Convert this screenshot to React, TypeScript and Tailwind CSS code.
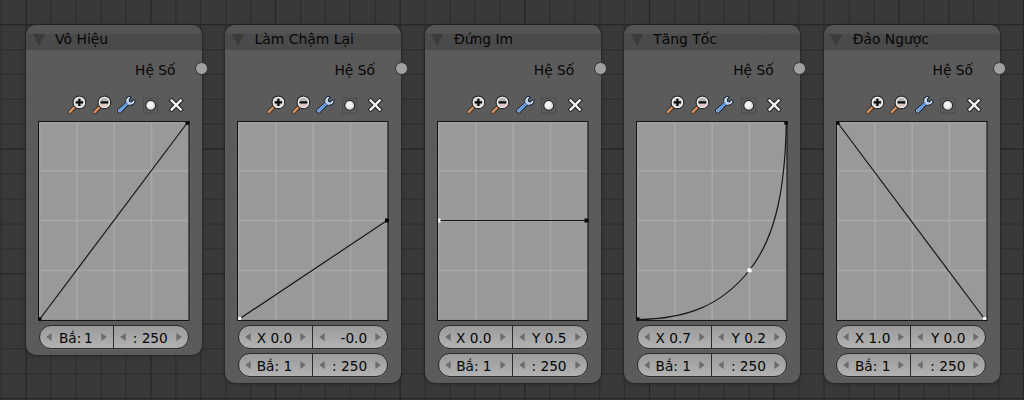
import React from "react";

type NodeData = {
  title: string;
  coords?: [string, string];
  frame: string;
  curve: string;
  points: { x: number; y: number; selected?: boolean }[];
};

const nodes: NodeData[] = [
  {
    title: "Vô Hiệu",
    frame: "Bắ:\u20091",
    curve: "M1.5 198.5L149.5 1.5",
    points: [{ x: 1.5, y: 198.3 }, { x: 149.5, y: 1.7 }],
  },
  {
    title: "Làm Chậm Lại",
    coords: ["X 0.0", "-0.0"],
    frame: "Bắ: 1",
    curve: "M1.5 198.5L150 99.5",
    points: [{ x: 2.2, y: 198, selected: true }, { x: 150, y: 99.5 }],
  },
  {
    title: "Đứng Im",
    coords: ["X 0.0", "Y 0.5"],
    frame: "Bắ: 1",
    curve: "M1.5 99.5L150 99.5",
    points: [{ x: 1.5, y: 99.5, selected: true }, { x: 149.5, y: 99.5 }],
  },
  {
    title: "Tăng Tốc",
    coords: ["X 0.7", "Y 0.2"],
    frame: "Bắ: 1",
    curve: "M1.5 198.5C50 198 85 185 113.3 149.5C137 119.5 149 76 150.3 2",
    points: [{ x: 1.5, y: 198.3 }, { x: 113.5, y: 149.3, selected: true }, { x: 150.3, y: 1.7 }],
  },
  {
    title: "Đảo Ngược",
    coords: ["X 1.0", "Y 0.0"],
    frame: "Bắ: 1",
    curve: "M1.5 1.5L149 198.5",
    points: [{ x: 1.5, y: 1.7 }, { x: 149, y: 198, selected: true }],
  },
];

const PITCH = 24.93;

function Backdrop() {
  const columns = Array.from({ length: 42 }, (_, i) => i);
  const rows = Array.from({ length: 16 }, (_, i) => i);
  return (
    <svg className="absolute inset-0" width="1024" height="400">
      {columns.map((i) => (
        <path key={i} d={`M${1.3 + i * PITCH} 0V400`} stroke={i % 5 === 1 ? "#272727" : "#2f2f2f"} strokeWidth="1.3" />
      ))}
      {rows.map((i) => (
        <path key={i} d={`M0 ${24.6 + i * PITCH}H1024`} stroke={i % 5 === 0 ? "#272727" : "#2f2f2f"} strokeWidth="1.3" />
      ))}
    </svg>
  );
}

function Magnifier({ plus }: { plus?: boolean }) {
  return (
    <svg width="24.5" height="22" viewBox="0 0 24.5 22" className="shrink-0">
      <path d="M3.6 18.4L8.8 13" stroke="#33241b" strokeWidth="4" strokeLinecap="round" />
      <path d="M3.6 18.4L8.2 13.6" stroke="#c97f4d" strokeWidth="2.6" strokeLinecap="round" />
      <path d="M3.4 17.8L7.2 13.8" stroke="#efb88e" strokeWidth="0.9" strokeLinecap="round" />
      <circle cx="13.4" cy="8.4" r="6.3" fill="#d6d6d6" stroke="#2b2b2b" strokeWidth="1.2" />
      <circle cx="13.4" cy="8.4" r="5.1" fill={plus ? "#cfcfcf" : "#b4b4b4"} stroke="#f2f2f2" strokeWidth="1.1" />
      {!plus && <path d="M9 9.4H17.8A4.5 4.5 0 0 1 9 9.4Z" fill="#e0c4c0" />}
      <path d={plus ? "M9.7 8.4H17.1M13.4 4.7V12.1" : "M9.6 8.4H17.2"} stroke="#080808" strokeWidth="2.2" />
    </svg>
  );
}

function Wrench() {
  return (
    <svg width="24.5" height="22" viewBox="0 0 24.5 22" className="shrink-0">
      <path
        d="M14.6 2.2C11.3 3.2 10.2 5.8 10.9 8.6L2.9 15.6C1.6 17.6 4 20 6 18.6L13.3 11C16.5 11.8 19.8 10.2 20.2 6.6L18.8 5.6L16.6 7.9L14.6 7.4L14.2 5.6L16.2 3.2Z"
        fill="#dce8f7"
        stroke="#1e2b3d"
        strokeWidth="1.1"
        strokeLinejoin="round"
      />
      <path d="M12 9.6L4.6 17" stroke="#5b94e2" strokeWidth="2.2" strokeLinecap="round" />
      <path d="M12.6 6.6C12.9 8.4 14.2 9.6 16.4 9.5" stroke="#9cc0ee" strokeWidth="1" fill="none" />
    </svg>
  );
}

function ClipDot() {
  return (
    <svg width="24.5" height="22" viewBox="0 0 24.5 22" className="shrink-0">
      <rect x="3.5" y="4.2" width="14.3" height="14.8" fill="#5c5c5c" stroke="#4c4c4c" />
      <circle cx="10.7" cy="11.4" r="5" fill="#dedede" stroke="#2b2b2b" strokeWidth="1.2" />
      <circle cx="10.2" cy="10.8" r="3" fill="#f3f3f3" />
    </svg>
  );
}

function Cross() {
  return (
    <svg width="24.5" height="22" viewBox="0 0 24.5 22" className="shrink-0" strokeLinecap="square">
      <path d="M7.7 6.5L16.7 15.5M16.7 6.5L7.7 15.5" stroke="#222222" strokeWidth="4.4" />
      <path d="M7.7 6.5L16.7 15.5M16.7 6.5L7.7 15.5" stroke="#f5f5f5" strokeWidth="2.4" />
    </svg>
  );
}

function CurvePlot({ curve, points }: Pick<NodeData, "curve" | "points">) {
  return (
    <svg width="152" height="200" viewBox="0 0 152 200" className="ml-[12px] mt-[5px] block">
      <rect x="0.5" y="0.5" width="150.5" height="199" fill="#999999" />
      <path d="M1.5 1V199M38.9 1V199M76.2 1V199M113.5 1V199" stroke="#a8a8a8" strokeWidth="1.6" />
      <path d="M1 1.5H150.5M1 50H150.5M1 99.6H150.5M1 149.5H150.5" stroke="#a8a8a8" strokeWidth="1.6" />
      <path d={curve} fill="none" stroke="#161616" strokeWidth="1.2" />
      {points.map((p) => (
        <rect key={`${p.x}-${p.y}`} x={p.x - 2} y={p.y - 2} width="4" height="4" fill={p.selected ? "#ffffff" : "#050505"} />
      ))}
      <rect x="0.5" y="0.5" width="150.5" height="199" fill="none" stroke="#141414" strokeWidth="1.1" />
    </svg>
  );
}

function Arrow({ right }: { right?: boolean }) {
  return (
    <svg width="6" height="8" viewBox="0 0 6 8" className="shrink-0">
      <path d={right ? "M0.4 0L5.8 4L0.4 8Z" : "M5.6 0L0.2 4L5.6 8Z"} fill="#6c6c6c" />
    </svg>
  );
}

function Field({ value, last }: { value: string; last?: boolean }) {
  return (
    <div className={last ? "flex flex-1 items-center px-[6px]" : "flex w-[74px] items-center border-r border-[#2c2c2c] px-[6px]"}>
      <Arrow />
      <span className="flex-1 whitespace-pre pr-[8px] pt-px text-right leading-[20px] text-[#060606]">{value}</span>
      <Arrow right />
    </div>
  );
}

function FieldPair({ values }: { values: [string, string] }) {
  return (
    <div className="ml-[12.8px] mt-1 flex h-6 w-[150px] rounded-full border border-[#2c2c2c] bg-linear-to-b from-[#9b9b9b] to-[#b2b2b2] shadow-[0_1px_0_rgba(255,255,255,0.08)]">
      <Field value={values[0]} />
      <Field value={values[1]} last />
    </div>
  );
}

function CurveNode({ node }: { node: NodeData }) {
  return (
    <section className="relative w-44 shrink-0 rounded-[10px] bg-[#626262]/85 pb-1.5 shadow-[0_0_0_1px_rgba(30,30,30,0.3),0_1px_4px_rgba(0,0,0,0.3)]">
      <header className="flex h-[25px] items-center rounded-t-[10px] bg-linear-to-b from-[#525252]/80 from-[30%] to-[#464646]/80 to-[40%] pl-[6.5px]">
        <svg width="12" height="12" viewBox="0 0 12 12" className="mt-[4px] shrink-0">
          <path d="M0 0H12L6 12Z" fill="#3b3b3b" />
        </svg>
        <h2 className="ml-[10.6px] whitespace-nowrap pt-[3px] text-[13.9px] leading-[20px] text-[#060606]">{node.title}</h2>
      </header>
      <div className="flex h-11 items-start justify-end pr-[26.5px] pt-[10px] text-[13.8px] leading-[20px] text-[#060606]">Hệ Số</div>
      <span className="absolute right-[-6.2px] top-[37px] size-[13px] rounded-full border border-[#303030] bg-[#a0a0a0]" />
      <div className="flex h-[22px] pl-10">
        <Magnifier plus />
        <Magnifier />
        <Wrench />
        <ClipDot />
        <Cross />
      </div>
      <CurvePlot curve={node.curve} points={node.points} />
      {node.coords && <FieldPair values={node.coords} />}
      <FieldPair values={[node.frame, ": 250"]} />
    </section>
  );
}

export default function App() {
  return (
    <main className="relative h-[400px] w-[1024px] overflow-hidden bg-[#393939] font-['DejaVu_Sans',sans-serif] text-[13.7px]">
      <Backdrop />
      <div className="relative flex items-start gap-[23.4px] pl-[26px] pt-[25px]">
        {nodes.map((node) => (
          <CurveNode key={node.title} node={node} />
        ))}
      </div>
    </main>
  );
}
